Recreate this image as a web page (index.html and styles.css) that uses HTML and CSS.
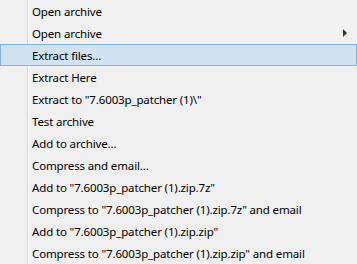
FILE: index.html
```html
<!DOCTYPE html>
<html lang="en">
<head>
    <meta charset="UTF-8">
    <title>Archive menu</title>
    <link rel="stylesheet" href="styles.css">
</head>
<body>
    <ul class="menu">
        <li class="item">Open archive</li>
        <li class="item has-sub">Open archive <span class="arrow"></span></li>
        <li class="item active">Extract files...</li>
        <li class="item">Extract Here</li>
        <li class="item">Extract to "7.6003p_patcher (1)\"</li>
        <li class="item">Test archive</li>
        <li class="item">Add to archive...</li>
        <li class="item">Compress and email...</li>
        <li class="item">Add to "7.6003p_patcher (1).zip.7z"</li>
        <li class="item">Compress to "7.6003p_patcher (1).zip.7z" and email</li>
        <li class="item">Add to "7.6003p_patcher (1).zip.zip"</li>
        <li class="item">Compress to "7.6003p_patcher (1).zip.zip" and email</li>
    </ul>
</body>
</html>
```

FILE: styles.css
```css
body {
    margin: 0;
    background: #f0f0f0;
    font-family: "Noto Sans", "Open Sans", sans-serif;
    font-size: 11.5px;
    letter-spacing: -0.14px;
    color: #000;
}
.menu {
    list-style: none;
    margin: 0;
    padding: 0;
    width: 357px;
    height: 264px;
    overflow: hidden;
    background: linear-gradient(to right, #f0f0f0 27px, #d9d9d9 27px, #d9d9d9 28px, #fbfbfb 28px, #fbfbfb 29px, #f0f0f0 29px);
}
.item {
    display: flex;
    align-items: center;
    height: 22px;
    padding-left: 32px;
    box-sizing: border-box;
    white-space: nowrap;
}
.has-sub {
    justify-content: space-between;
    padding-right: 10px;
}
.arrow {
    width: 0;
    height: 0;
    border-top: 4px solid transparent;
    border-bottom: 4px solid transparent;
    border-left: 4px solid #333;
}
.active {
    background: #d1e3f3;
    border: 1px solid #7fb3e8;
    padding-left: 31px;
}
```
